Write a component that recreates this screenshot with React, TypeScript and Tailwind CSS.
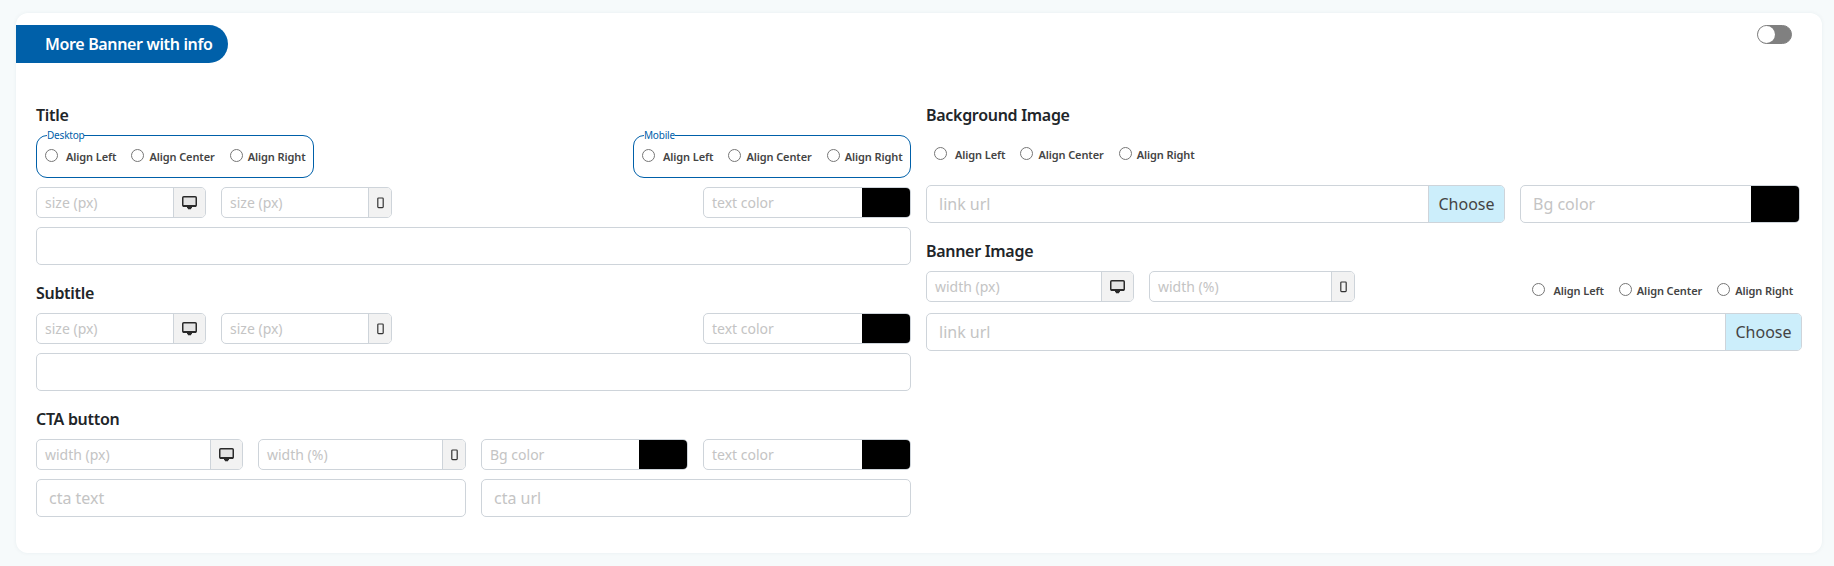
const ff = "font-['Noto_Sans','Open_Sans',sans-serif]";

function Desktop() {
  return (
    <svg width="15" height="14" viewBox="0 0 15 14" fill="none">
      <rect x="0.75" y="0.75" width="13.5" height="9.5" rx="1" fill="#e4e4e4" stroke="#2a2a2a" strokeWidth="1.5" />
      <path d="M1 9h13v2H1z" fill="#2a2a2a" />
      <path d="M5 11h5v1.2H9v1H6v-1H5z" fill="#2a2a2a" />
    </svg>
  );
}
function Mobile() {
  return (
    <svg width="7" height="12" viewBox="0 0 7 12" fill="none" stroke="#333" strokeWidth="1.2">
      <rect x="0.8" y="1" width="5.4" height="9.6" rx="0.8" />
    </svg>
  );
}

function Addon({ ph, kind, w }: { ph: string; kind: "d" | "m"; w: string }) {
  return (
    <div className={`flex h-[31px] ${w} border border-[#ced4da] rounded-[5px] overflow-hidden bg-white`}>
      <div className="flex-1 min-w-0 pl-[8px] text-[14px] leading-[29px] text-[#c4c4c4]">{ph}</div>
      <div className={`${kind === "d" ? "w-[32px]" : "w-[23px]"} border-l border-[#ced4da] bg-[#f2f2f2] flex items-center justify-center`}>
        {kind === "d" ? <Desktop /> : <Mobile />}
      </div>
    </div>
  );
}

function Color({ ph, w }: { ph: string; w: string }) {
  return (
    <div className={`flex h-[31px] ${w} border border-[#ced4da] rounded-[5px] overflow-hidden bg-white`}>
      <div className="flex-1 pl-[8px] text-[14px] leading-[29px] text-[#c4c4c4]">{ph}</div>
      <div className="w-[48px] bg-black" />
    </div>
  );
}

function Big({ ph, className = "" }: { ph?: string; className?: string }) {
  return (
    <div className={`h-[38px] border border-[#ced4da] rounded-[5px] bg-white pl-[12px] text-[16px] leading-[36px] text-[#c4c4c4] ${className}`}>
      {ph}
    </div>
  );
}

function Choose({ ph, className = "", btn }: { ph: string; className?: string; btn: string }) {
  return (
    <div className={`flex h-[38px] border border-[#ced4da] rounded-[5px] overflow-hidden bg-white ${className}`}>
      <div className="flex-1 pl-[12px] text-[16px] leading-[36px] text-[#c4c4c4]">{ph}</div>
      <div className={`${btn} border-l border-[#ced4da] bg-[#cceefb] text-[16px] leading-[36px] text-[#444] text-center`}>Choose</div>
    </div>
  );
}

function Radios() {
  const items = [
    { t: "Align Left", gap: "ml-[8px]" },
    { t: "Align Center", gap: "ml-[5px]" },
    { t: "Align Right", gap: "ml-[5px]" },
  ];
  return (
    <div className="flex gap-[15px] items-center whitespace-nowrap">
      {items.map((i) => (
        <label key={i.t} className="flex items-center">
          <input type="radio" name={i.t} className="w-[13px] h-[13px] m-0 -translate-y-[2px]" readOnly />
          <span className={`${i.gap} text-[11px] leading-[16px] font-semibold tracking-[-0.1px] text-[#444]`}>{i.t}</span>
        </label>
      ))}
    </div>
  );
}

function Box({ label, className = "" }: { label: string; className?: string }) {
  return (
    <fieldset className={`min-w-0 border border-[#0060a9] rounded-[11px] h-[49px] pl-[8px] pr-[8px] ${className}`}>
      <legend className="ml-[2px] px-0 text-[10px] leading-[12px] tracking-[-0.2px] text-[#0060a9]">{label}</legend>
      <div className="pt-[8px]">
        <Radios />
      </div>
    </fieldset>
  );
}

function H({ children, className = "" }: { children: React.ReactNode; className?: string }) {
  return <div className={`text-[16px] leading-[24px] font-semibold tracking-[-0.3px] text-[#212529] ${className}`}>{children}</div>;
}

export default function App() {
  return (
    <div className={`${ff} w-[1834px] h-[566px] bg-[#f6fafb] pt-[13px] pl-[16px] overflow-hidden`}>
      <div className="relative w-[1806px] h-[540px] bg-white rounded-[12px] pt-[12px] shadow-[0_0_4px_rgba(0,60,80,0.06)]">
        <div className="w-[212px] h-[38px] bg-[#0060a9] rounded-r-full pl-[29px] text-[16px] leading-[39px] font-semibold tracking-[-0.35px] text-white">
          More Banner with info
        </div>
        <div className="absolute top-[12px] right-[30px] w-[35px] h-[19px] rounded-full bg-[#808080] border border-[#808080]">
          <div className="w-[17px] h-[17px] rounded-full bg-white" />
        </div>
        <div className="flex gap-[15px] px-[20px] mt-[40px]">
          <div className="w-[875px]">
            <H>Title</H>
            <div className="flex justify-between mt-[2px]">
              <Box label="Desktop" className="w-[278px]" />
              <Box label="Mobile" className="w-[278px]" />
            </div>
            <div className="flex justify-between mt-[9px]">
              <div className="flex gap-[15px]">
                <Addon ph="size (px)" kind="d" w="w-[170px]" />
                <Addon ph="size (px)" kind="m" w="w-[171px]" />
              </div>
              <Color ph="text color" w="w-[208px]" />
            </div>
            <Big className="mt-[9px]" />
            <H className="mt-[16px]">Subtitle</H>
            <div className="flex justify-between mt-[8px]">
              <div className="flex gap-[15px]">
                <Addon ph="size (px)" kind="d" w="w-[170px]" />
                <Addon ph="size (px)" kind="m" w="w-[171px]" />
              </div>
              <Color ph="text color" w="w-[208px]" />
            </div>
            <Big className="mt-[9px]" />
            <H className="mt-[16px]">CTA button</H>
            <div className="flex gap-[15px] mt-[8px]">
              <Addon ph="width (px)" kind="d" w="w-[207px]" />
              <Addon ph="width (%)" kind="m" w="w-[208px]" />
              <Color ph="Bg color" w="w-[207px]" />
              <Color ph="text color" w="w-[208px]" />
            </div>
            <div className="flex gap-[15px] mt-[9px]">
              <Big ph="cta text" className="flex-1" />
              <Big ph="cta url" className="flex-1" />
            </div>
          </div>
          <div className="w-[876px]">
            <H>Background Image</H>
            <div className="pl-[8px] mt-[20px]">
              <Radios />
            </div>
            <div className="flex gap-[15px] mt-[22px]">
              <Choose ph="link url" btn="w-[76px]" className="w-[579px]" />
              <div className="flex h-[38px] w-[280px] border border-[#ced4da] rounded-[5px] overflow-hidden bg-white">
                <div className="flex-1 pl-[12px] text-[16px] leading-[36px] text-[#c4c4c4]">Bg color</div>
                <div className="w-[48px] bg-black" />
              </div>
            </div>
            <H className="mt-[16px]">Banner Image</H>
            <div className="flex justify-between items-center mt-[8px]">
              <div className="flex gap-[15px]">
                <Addon ph="width (px)" kind="d" w="w-[208px]" />
                <Addon ph="width (%)" kind="m" w="w-[206px]" />
              </div>
              <div className="pr-[9px] pt-[9px]">
                <Radios />
              </div>
            </div>
            <Choose ph="link url" btn="w-[76px]" className="mt-[11px]" />
          </div>
        </div>
      </div>
    </div>
  );
}
